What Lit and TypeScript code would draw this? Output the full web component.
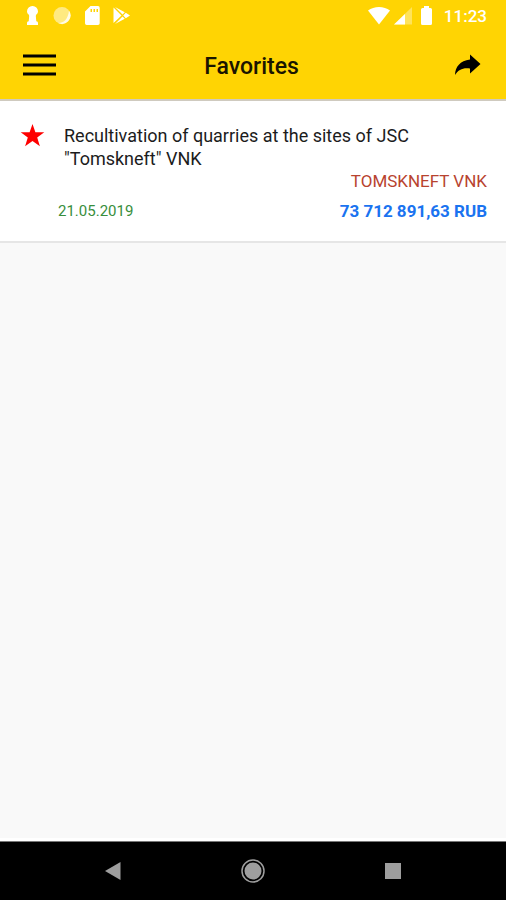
import { LitElement, html, css } from "lit";
import { customElement, property } from "lit/decorators.js";

interface Tender {
  title: string;
  company: string;
  date: string;
  price: string;
}

const FAVORITES: Tender[] = [
  {
    title: 'Recultivation of quarries at the sites of JSC "Tomskneft" VNK',
    company: "TOMSKNEFT VNK",
    date: "21.05.2019",
    price: "73 712 891,63 RUB",
  },
];

@customElement("status-bar")
class StatusBar extends LitElement {
  static styles = css`
    :host {
      display: flex;
      align-items: center;
      justify-content: space-between;
      height: 32px;
      padding: 0 19px 0 22px;
      color: #fff;
      font-size: 17px;
      font-weight: 500;
    }
    .group {
      display: flex;
      align-items: center;
    }
    .left {
      gap: 10px;
    }
    .right {
      gap: 4px;
    }
    svg {
      display: block;
      fill: currentColor;
    }
    .time {
      margin-left: 4px;
    }
  `;

  render() {
    return html`
      <div class="group left">
        <svg width="20" height="20" viewBox="0 0 20 20">
          <path d="M10.500 0a5.400 5.400 0 0 1 5.500 5.300c0 1.500-.7 2.500-1.700 3.300-.5.500-.5 1.400-.4 2.400l.4 4.200c1.200.2 1.700.8 1.700 1.800V19H5v-2c0-1 .5-1.600 1.700-1.800l.4-4.200c.1-1 .1-1.900-.4-2.400C5.700 7.800 5 6.800 5 5.300A5.400 5.400 0 0 1 10.500 0z" />
        </svg>
        <svg width="20" height="20" viewBox="0 0 20 20">
          <circle cx="10" cy="9.500" r="8.500" opacity=".5" />
          <path d="M17 4.500a8.600 8.600 0 0 1-11 12.500c5 .3 10-3 11-12.500z" opacity=".8" />
        </svg>
        <svg width="20" height="20" viewBox="0 0 20 20">
          <path fill-rule="evenodd" d="M8.500 0H16a1.700 1.700 0 0 1 1.700 1.700v15.600A1.700 1.700 0 0 1 16 19H4.700A1.700 1.700 0 0 1 3 17.300V5.500zM8.500 3v3H10V3zm3 0v3H13V3zm3 0v3H16V3z" />
        </svg>
        <svg width="20" height="20" viewBox="0 0 20 20">
          <path d="M1.500 1.500v15.500l8-7.500zM3 1l7.500 7.500 2.300-2.200zM3 18l7.500-7.500 2.300 2.200zM13.800 6.800l4.200 2.700-4.200 2.800-2.600-2.800z" />
        </svg>
      </div>
      <div class="group right">
        <svg width="22" height="20" viewBox="0 0 22 20">
          <path d="M0 4.500C6-.2 16-.2 22 4.500L11 18.500z" />
        </svg>
        <svg width="18" height="20" viewBox="0 0 18 20">
          <path d="M18 1v17.500H0z" opacity=".35" />
          <path d="M11 8v10.500H0z" />
        </svg>
        <svg width="20" height="20" viewBox="0 0 20 20">
          <path d="M8 0h5v2h1.500A1.500 1.500 0 0 1 16 3.500v14a1.500 1.500 0 0 1-1.500 1.500h-8A1.500 1.500 0 0 1 5 17.500v-14A1.500 1.500 0 0 1 6.500 2H8z" />
        </svg>
        <span class="time">11:23</span>
      </div>
    `;
  }
}

@customElement("app-header")
class AppHeader extends LitElement {
  @property() heading = "";

  static styles = css`
    :host {
      display: grid;
      grid-template-columns: 1fr auto 1fr;
      align-items: center;
      height: 67px;
      padding: 0 24px 0 21px;
    }
    h1 {
      margin: 0;
      padding-top: 2px;
      font-size: 23px;
      line-height: 28px;
      font-weight: 500;
      color: #1a1500;
    }
    button {
      padding: 0;
      border: 0;
      background: none;
      cursor: pointer;
      color: #000;
    }
    .share {
      justify-self: end;
    }
    .menu {
      justify-self: start;
    }
    svg {
      display: block;
      fill: currentColor;
    }
  `;

  render() {
    return html`
      <button class="menu" aria-label="Menu">
        <svg width="36" height="24" viewBox="0 0 36 24">
          <path d="M2 .5h33v3H2zM2 9.500h33v3H2zM2 18.500h33v3H2z" />
        </svg>
      </button>
      <h1>${this.heading}</h1>
      <button class="share" aria-label="Share">
        <svg width="28" height="24" viewBox="0 0 28 24">
          <path d="M16 .5l10.500 9.500L16 19.500v-5C9 13.500 4.500 15.500 1 21c.3-8 5-14.500 15-15.500z" />
        </svg>
      </button>
    `;
  }
}

@customElement("tender-card")
class TenderCard extends LitElement {
  @property({ attribute: false }) tender!: Tender;

  static styles = css`
    :host {
      display: flex;
      align-items: flex-start;
      padding: 23px 19px 18px 20px;
      background: #fff;
      border-bottom: 2px solid #e6e6e6;
      font-size: 17px;
      line-height: 23px;
    }
    button {
      flex: none;
      padding: 0;
      border: 0;
      background: none;
      color: #fe0000;
      cursor: pointer;
    }
    svg {
      display: block;
      fill: currentColor;
    }
    .body {
      flex: 1;
      padding-left: 13px;
    }
    h2 {
      margin: 0;
      padding: 0 48px 0 6px;
      font-size: 18px;
      font-weight: 400;
      color: #1c1c1c;
    }
    .company {
      text-align: right;
      color: #b8432f;
    }
    .meta {
      display: flex;
      justify-content: space-between;
      padding-top: 7px;
    }
    .date {
      color: #388e3c;
      font-size: 15px;
    }
    .price {
      color: #1a73f0;
      font-weight: 700;
    }
  `;

  render() {
    const t = this.tender;
    return html`
      <button aria-label="Remove from favorites">
        <svg width="25" height="23" viewBox="0 0 25 23">
          <path d="M12.500 0l2.900 8.300h8.900l-7.100 5.300 2.700 8.600-7.400-5.200-7.400 5.200 2.700-8.600L.7 8.300h8.900z" />
        </svg>
      </button>
      <div class="body">
        <h2>${t.title}</h2>
        <div class="company">${t.company}</div>
        <div class="meta">
          <time class="date">${t.date}</time>
          <span class="price">${t.price}</span>
        </div>
      </div>
    `;
  }
}

@customElement("system-nav")
class SystemNav extends LitElement {
  static styles = css`
    :host {
      display: flex;
      align-items: center;
      justify-content: center;
      gap: 112px;
      height: 58px;
      background: #000;
      border-top: 1px solid #777;
      color: #9e9e9e;
    }
    button {
      padding: 0;
      border: 0;
      background: none;
      color: inherit;
    }
    svg {
      display: block;
      fill: currentColor;
    }
  `;

  render() {
    return html`
      <button aria-label="Back">
        <svg width="28" height="28" viewBox="0 0 28 28">
          <path d="M21.500 5v18L6 14z" />
        </svg>
      </button>
      <button aria-label="Home">
        <svg width="28" height="28" viewBox="0 0 28 28">
          <circle cx="14" cy="14" r="8.500" />
          <circle cx="14" cy="14" r="11" fill="none" stroke="currentColor" stroke-width="1.500" />
        </svg>
      </button>
      <button aria-label="Recent apps">
        <svg width="28" height="28" viewBox="0 0 28 28">
          <path d="M6 6h16v16H6z" />
        </svg>
      </button>
    `;
  }
}

@customElement("app-root")
class AppRoot extends LitElement {
  static styles = css`
    :host {
      display: flex;
      flex-direction: column;
      min-height: 100vh;
      background: #f9f9f9;
      font-family: Roboto, "Liberation Sans", sans-serif;
    }
    .top {
      background: #ffd403;
      border-bottom: 2px solid #cfcabf;
    }
    main {
      flex: 1;
      border-bottom: 3px solid #fff;
    }
  `;

  render() {
    return html`
      <header class="top">
        <status-bar></status-bar>
        <app-header heading="Favorites"></app-header>
      </header>
      <main>
        ${FAVORITES.map((t) => html`<tender-card .tender=${t}></tender-card>`)}
      </main>
      <system-nav></system-nav>
    `;
  }
}
